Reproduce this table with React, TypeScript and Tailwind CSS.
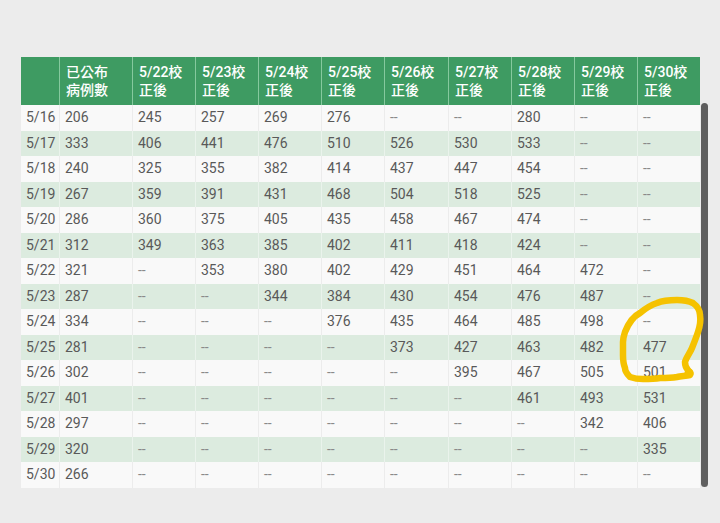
import React from 'react';

const COLS = 'grid grid-cols-[38px_73px_63px_63px_63px_63px_64px_63px_63px_63px_63px]';

const HEADERS = ['', '已公布\n病例數', '5/22校\n正後', '5/23校\n正後', '5/24校\n正後', '5/25校\n正後', '5/26校\n正後', '5/27校\n正後', '5/28校\n正後', '5/29校\n正後', '5/30校\n正後'];

const ROWS: string[][] = [
  ['5/16', '206', '245', '257', '269', '276', '--', '--', '280', '--', '--'],
  ['5/17', '333', '406', '441', '476', '510', '526', '530', '533', '--', '--'],
  ['5/18', '240', '325', '355', '382', '414', '437', '447', '454', '--', '--'],
  ['5/19', '267', '359', '391', '431', '468', '504', '518', '525', '--', '--'],
  ['5/20', '286', '360', '375', '405', '435', '458', '467', '474', '--', '--'],
  ['5/21', '312', '349', '363', '385', '402', '411', '418', '424', '--', '--'],
  ['5/22', '321', '--', '353', '380', '402', '429', '451', '464', '472', '--'],
  ['5/23', '287', '--', '--', '344', '384', '430', '454', '476', '487', '--'],
  ['5/24', '334', '--', '--', '--', '376', '435', '464', '485', '498', '--'],
  ['5/25', '281', '--', '--', '--', '--', '373', '427', '463', '482', '477'],
  ['5/26', '302', '--', '--', '--', '--', '--', '395', '467', '505', '501'],
  ['5/27', '401', '--', '--', '--', '--', '--', '--', '461', '493', '531'],
  ['5/28', '297', '--', '--', '--', '--', '--', '--', '--', '342', '406'],
  ['5/29', '320', '--', '--', '--', '--', '--', '--', '--', '--', '335'],
  ['5/30', '266', '--', '--', '--', '--', '--', '--', '--', '--', '--'],
];

const App: React.FC = () => {
  return (
    <div
      className="relative w-[720px] h-[523px] overflow-hidden bg-[#ececec]"
      style={{ fontFamily: 'Roboto, "Noto Sans CJK TC", "Noto Sans", sans-serif' }}
    >
      <div className="flex pt-[57px] pl-[21px]">
        <div className="w-[679px]">
          {/* header */}
          <div className={`${COLS} h-[48px] bg-[#3e9b62]`}>
            {HEADERS.map((h, i) => (
              <div
                key={i}
                className={`pl-[6px] pt-[6px] text-[14px] leading-[18px] font-medium text-white whitespace-pre-line ${i > 0 ? 'border-l border-[#86c99e]' : ''}`}
              >
                {h}
              </div>
            ))}
          </div>
          {/* body */}
          {ROWS.map((row, r) => {
            const green = r % 2 === 1;
            return (
              <div key={r} className={`${COLS} h-[25.5px] ${green ? 'bg-[#dcebdf]' : 'bg-[#f9f9f9]'}`}>
                {row.map((cell, c) => (
                  <div
                    key={c}
                    className={`pl-[5px] text-[14px] leading-[25.5px] ${cell === '--' ? 'text-[#8a8a8a] text-[12px]' : 'text-[#595959]'} ${c > 0 ? (green ? 'border-l border-[#eaf3ec]' : 'border-l border-[#ececec]') : ''}`}
                  >
                    {cell}
                  </div>
                ))}
              </div>
            );
          })}
        </div>
        {/* scroll indicator */}
        <div className="mt-[46px] ml-[1px] w-[7px] h-[384px] rounded-full bg-[#5e5e5e]" />
      </div>

      {/* hand-drawn highlight */}
      <svg className="absolute inset-0 pointer-events-none" width="720" height="523" viewBox="0 0 720 523">
        <path
          d="M625 332 C629 322 634 316 640 313 C646 308 651 305 657 303 C664 300 670 300 677 300 C684 300 689 301 693 303 C697 306 700 310 700 315 C701 321 700 326 698 332 C696 338 694 343 692 348 C690 353 686 358 685 362 C685 366 686 368 688 370 C690 372 691 374 690 375 C686 376 681 376 677 377 C671 378 666 378 660 378 C654 379 648 379 643 379 C637 379 633 378 630 377 C627 374 625 371 625 368 C623 363 623 359 623 355 C623 350 623 346 623 342 C623 338 624 335 625 332 Z"
          fill="none"
          stroke="#f5c200"
          strokeWidth="6.5"
          strokeLinecap="round"
          strokeLinejoin="round"
        />
        <circle cx="689" cy="373" r="4.5" fill="#f5c200" />
      </svg>
    </div>
  );
};

export default App;
